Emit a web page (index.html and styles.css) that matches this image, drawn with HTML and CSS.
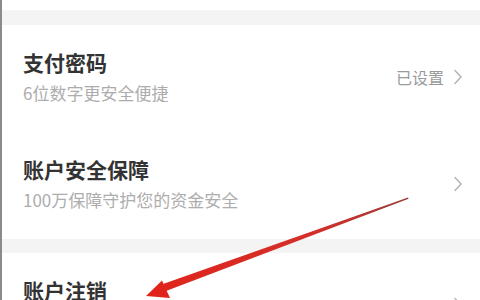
FILE: index.html
```html
<!DOCTYPE html>
<html lang="zh-CN">
<head>
<meta charset="utf-8">
<link rel="stylesheet" href="styles.css">
</head>
<body>
<div class="page">
  <div class="gap gap-top"></div>
  <div class="row">
    <div class="texts">
      <div class="title">支付密码</div>
      <div class="sub">6位数字更安全便捷</div>
    </div>
    <div class="right">
      <span class="status">已设置</span>
      <svg class="chev" width="10" height="16" viewBox="0 0 10 16"><polyline points="2,1.5 8,8 2,14.5" fill="none" stroke="#b4b4b4" stroke-width="1.5" stroke-linecap="round" stroke-linejoin="round"/></svg>
    </div>
  </div>
  <div class="row">
    <div class="texts">
      <div class="title">账户安全保障</div>
      <div class="sub">100万保障守护您的资金安全</div>
    </div>
    <div class="right">
      <svg class="chev" width="10" height="16" viewBox="0 0 10 16"><polyline points="2,1.5 8,8 2,14.5" fill="none" stroke="#b4b4b4" stroke-width="1.5" stroke-linecap="round" stroke-linejoin="round"/></svg>
    </div>
  </div>
  <div class="gap gap-mid"></div>
  <div class="row">
    <div class="texts">
      <div class="title">账户注销</div>
      <div class="sub">&nbsp;</div>
    </div>
    <div class="right">
      <svg class="chev" width="10" height="16" viewBox="0 0 10 16"><polyline points="2,1.5 8,8 2,14.5" fill="none" stroke="#b4b4b4" stroke-width="1.5" stroke-linecap="round" stroke-linejoin="round"/></svg>
    </div>
  </div>
  <svg class="arrow" width="480" height="300" viewBox="0 0 480 300">
    <defs>
      <linearGradient id="g" x1="408" y1="198" x2="150" y2="295" gradientUnits="userSpaceOnUse">
        <stop offset="0" stop-color="#9a3a3a"/>
        <stop offset="0.35" stop-color="#d2302a"/>
        <stop offset="1" stop-color="#e0241c"/>
      </linearGradient>
    </defs>
    <polygon points="408,197.5 408.6,198.8 166,291 163,284" fill="url(#g)"/>
    <polygon points="146,296 162,280.5 170,298" fill="#e0241c"/>
  </svg>
</div>
</body>
</html>
```
FILE: styles.css
```css
html, body {
  margin: 0;
  padding: 0;
  background: #ffffff;
}
.page {
  position: relative;
  width: 478px;
  height: 300px;
  overflow: hidden;
  border-left: 2px solid #8a8a8a;
  background: #ffffff;
  font-family: "Noto Sans CJK SC", "Noto Sans", sans-serif;
}
.gap {
  background: #f4f4f4;
}
.gap-top {
  height: 15px;
  margin-top: 10px;
}
.gap-mid {
  height: 14px;
}
.row {
  display: flex;
  align-items: center;
  justify-content: space-between;
  padding: 27px 17px 31px 21px;
}
.texts {
  display: flex;
  flex-direction: column;
  gap: 11px;
}
.title {
  font-size: 21px;
  line-height: 21px;
  font-weight: 700;
  color: #333333;
}
.sub {
  font-size: 17px;
  line-height: 17px;
  color: #adadad;
}
.right {
  display: flex;
  align-items: center;
  gap: 9px;
}
.status {
  font-size: 16px;
  line-height: 16px;
  color: #9a9a9a;
}
.chev {
  display: block;
}
.arrow {
  position: absolute;
  left: -2px;
  top: 0;
  pointer-events: none;
}
```
